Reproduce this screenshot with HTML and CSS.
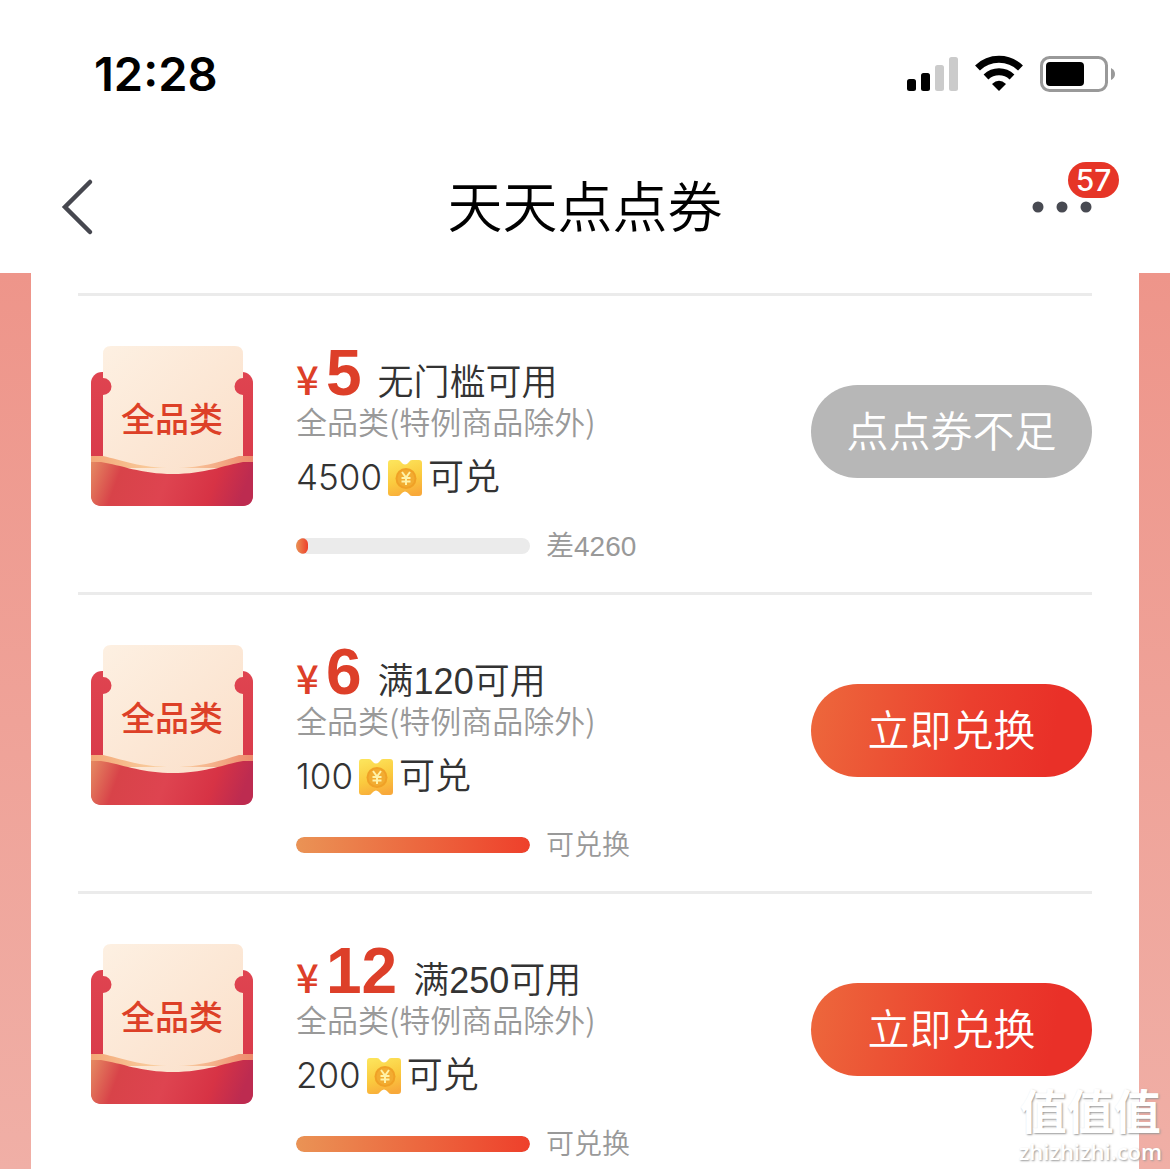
FILE: index.html
```html
<!DOCTYPE html>
<html lang="zh-CN">
<head>
<meta charset="utf-8">
<meta name="viewport" content="width=device-width, initial-scale=1">
<title>天天点点券</title>
<link rel="stylesheet" href="styles.css">
</head>
<body>
<svg class="defs" width="0" height="0" aria-hidden="true">
  <defs>
    <linearGradient id="paper" x1="0" y1="0" x2="1" y2="1">
      <stop offset="0" stop-color="#fdf0e2"/><stop offset="1" stop-color="#fbdfc9"/>
    </linearGradient>
    <linearGradient id="side" x1="0" y1="0" x2="0" y2="1">
      <stop offset="0" stop-color="#df4450"/><stop offset="1" stop-color="#d63648"/>
    </linearGradient>
    <linearGradient id="pocket" x1="0" y1="0" x2="1" y2="0.1">
      <stop offset="0" stop-color="#e58a62"/><stop offset="0.2" stop-color="#d84349"/><stop offset="0.5" stop-color="#de4450"/><stop offset="0.8" stop-color="#d73345"/><stop offset="1" stop-color="#bd2b50"/>
    </linearGradient>
    <linearGradient id="trim" x1="0" y1="0" x2="1" y2="0">
      <stop offset="0" stop-color="#f3a777"/><stop offset="0.5" stop-color="#fbd7a8"/><stop offset="1" stop-color="#ee8a6c"/>
    </linearGradient>
    <linearGradient id="gold" x1="0.3" y1="0" x2="0.6" y2="1">
      <stop offset="0" stop-color="#fce35a"/><stop offset="0.55" stop-color="#fbca3e"/><stop offset="1" stop-color="#f8a93a"/>
    </linearGradient>
    <symbol id="envelope" viewBox="0 0 162 162">
      <rect x="0" y="26" width="162" height="134" rx="11" fill="url(#side)"/>
      <path d="M20 0H144Q152 0 152 8V32A8.500 8.500 0 0 0 152 49V130H12V49A8.500 8.500 0 0 0 12 32V8Q12 0 20 0Z" fill="url(#paper)"/>
      <path d="M0 110H12C30 114 50 122 82 122S134 114 148 110H162V122H0Z" fill="url(#trim)"/>
      <path d="M0 116H10C30 119 50 128 82 128S134 119 152 116H162V149Q162 160 151 160H11Q0 160 0 149Z" fill="url(#pocket)"/>
    </symbol>
    <symbol id="ticket" viewBox="0 0 34 36">
      <path d="M3 0H10Q12 0 13 2Q17 7 21 2Q22 0 24 0H31Q34 0 34 3V33Q34 36 31 36H24Q22 36 21 34Q17 29 13 34Q12 36 10 36H3Q0 36 0 33V3Q0 0 3 0Z" fill="url(#gold)"/>
      <circle cx="18" cy="18.500" r="10.500" fill="#f0a126"/>
      <circle cx="18" cy="18.500" r="8.500" fill="#f2ac31"/>
      <path d="M14 12L18 17.500L22 12M18 17.500V25M13.500 18H22.500M13.500 21.500H22.500" fill="none" stroke="#fff2a8" stroke-width="2"/>
    </symbol>
  </defs>
</svg>
<div class="app">
  <header class="top">
    <div class="status">
      <span class="time">12:28</span>
      <div class="indicators">
        <svg width="52" height="36" viewBox="0 0 52 36" aria-label="信号">
          <rect x="1" y="23" width="9" height="12" rx="2.500"/><rect x="15" y="17" width="9" height="18" rx="2.500"/>
          <rect x="29" y="9" width="9" height="26" rx="2.500" fill="#cbcbcb"/><rect x="43" y="1" width="9" height="34" rx="2.500" fill="#cbcbcb"/>
        </svg>
        <svg width="50" height="38" viewBox="0 0 50 38" aria-label="无线网络">
          <path d="M3.500 13A31 31 0 0 1 46.500 13" fill="none" stroke="#000" stroke-width="7"/>
          <path d="M12 22A19 19 0 0 1 38 22" fill="none" stroke="#000" stroke-width="7"/>
          <path d="M25 36L18 29Q25 22.500 32 29Z"/>
        </svg>
        <svg width="75" height="36" viewBox="0 0 75 36" aria-label="电池">
          <rect x="1.500" y="1.500" width="65" height="33" rx="8" fill="none" stroke="#999" stroke-width="3"/>
          <rect x="6" y="6" width="38" height="24" rx="4"/>
          <path d="M71 12Q75 14 75 18T71 24Z" fill="#999"/>
        </svg>
      </div>
    </div>
    <nav class="bar">
      <button class="back" aria-label="返回">
        <svg width="32" height="56" viewBox="0 0 32 56"><path d="M28 3L3 28L28 53" fill="none" stroke="#46474f" stroke-width="4.500" stroke-linecap="round"/></svg>
      </button>
      <h1 class="title">天天点点券</h1>
      <button class="more" aria-label="更多">
        <svg width="60" height="12" viewBox="0 0 60 12" fill="#484a52"><circle cx="5" cy="6" r="5.500"/><circle cx="29" cy="6" r="5.500"/><circle cx="53" cy="6" r="5.500"/></svg>
        <span class="badge">57</span>
      </button>
    </nav>
  </header>
  <main class="stage">
    <ul class="coupons">
      <li class="coupon">
        <div class="cover"><svg class="art" aria-hidden="true"><use href="#envelope"/></svg><span class="label">全品类</span></div>
        <div class="info">
          <div class="price"><span class="yen">¥</span><strong class="amount">5</strong><span class="rule">无门槛可用</span></div>
          <div class="scope">全品类(特例商品除外)</div>
          <div class="cost"><span class="points">4500</span><svg class="coin" aria-hidden="true"><use href="#ticket"/></svg><span>可兑</span></div>
          <div class="progress"><div class="track"><div class="fill" style="width:5%"></div></div><span class="state">差4260</span></div>
        </div>
        <button class="redeem" disabled>点点券不足</button>
      </li>
      <li class="coupon">
        <div class="cover"><svg class="art" aria-hidden="true"><use href="#envelope"/></svg><span class="label">全品类</span></div>
        <div class="info">
          <div class="price"><span class="yen">¥</span><strong class="amount">6</strong><span class="rule">满120可用</span></div>
          <div class="scope">全品类(特例商品除外)</div>
          <div class="cost"><span class="points">100</span><svg class="coin" aria-hidden="true"><use href="#ticket"/></svg><span>可兑</span></div>
          <div class="progress"><div class="track"><div class="fill" style="width:100%"></div></div><span class="state">可兑换</span></div>
        </div>
        <button class="redeem">立即兑换</button>
      </li>
      <li class="coupon">
        <div class="cover"><svg class="art" aria-hidden="true"><use href="#envelope"/></svg><span class="label">全品类</span></div>
        <div class="info">
          <div class="price"><span class="yen">¥</span><strong class="amount">12</strong><span class="rule">满250可用</span></div>
          <div class="scope">全品类(特例商品除外)</div>
          <div class="cost"><span class="points">200</span><svg class="coin" aria-hidden="true"><use href="#ticket"/></svg><span>可兑</span></div>
          <div class="progress"><div class="track"><div class="fill" style="width:100%"></div></div><span class="state">可兑换</span></div>
        </div>
        <button class="redeem">立即兑换</button>
      </li>
    </ul>
  </main>
  <div class="watermark"><span class="mark">值值值</span><span class="site">zhizhizhi.com</span></div>
</div>
</body>
</html>
```
FILE: styles.css
```css
* { box-sizing: border-box; }
body {
  margin: 0;
  background: #fff;
  color: #333;
  font-family: "Liberation Sans", "Noto Sans CJK SC", sans-serif;
}
button { border: 0; padding: 0; background: none; font: inherit; color: inherit; }
svg { display: block; flex: none; overflow: visible; }
.defs { position: absolute; }

.app {
  position: relative;
  display: flex;
  flex-direction: column;
  height: 100vh;
  overflow: hidden;
}

/* status bar and navigation */
.top { flex: none; }
.status {
  display: flex;
  align-items: center;
  justify-content: space-between;
  height: 148px;
  padding: 0 55px 0 94px;
}
.time { color: #000; font: 600 47px/56px Inter, sans-serif; }
.indicators { display: flex; align-items: center; gap: 16px; }
.bar {
  display: grid;
  grid-template-columns: 96px 1fr 96px;
  align-items: center;
  height: 125px;
  padding: 0 42px 8px 62px;
}
.title {
  margin: 0;
  padding: 0 20px 8px 0;
  text-align: center;
  color: #000;
  font: 350 55px/64px "Noto Sans CJK SC", sans-serif;
}
.more { position: relative; justify-self: end; margin-right: 35px; }
.badge {
  position: absolute;
  left: 35px;
  bottom: 15px;
  width: 51px;
  border-radius: 18px;
  background: #e63527;
  color: #fff;
  text-align: center;
  font: 500 30px/36px Inter, sans-serif;
}

/* coupon list */
.stage {
  flex: 1;
  min-height: 0;
  overflow: hidden;
  padding: 0 31px;
  background: linear-gradient(#ee958a, #f0afa6);
}
.coupons {
  margin: 0;
  padding: 20px 47px 20px;
  background: #fff;
  list-style: none;
}
.coupon {
  display: flex;
  align-items: flex-start;
  height: 299px;
  padding: 50px 0 0 13px;
  border-top: 3px solid #ebebeb;
}
.cover { display: grid; flex: none; width: 162px; height: 162px; }
.art, .label { grid-area: 1 / 1; }
.art { width: 162px; height: 162px; }
.label {
  z-index: 1;
  padding-top: 51px;
  text-align: center;
  color: #dd4027;
  font: 500 34px/42px "Noto Sans CJK SC", sans-serif;
}
.info { flex: 1; min-width: 0; padding-left: 43px; white-space: nowrap; font-weight: 350; }
.price { display: flex; align-items: baseline; height: 55px; line-height: 54px; }
.yen {
  width: 30px;
  color: #dd3f29;
  font-family: "Noto Sans CJK SC", sans-serif;
  font-size: 40px;
  font-weight: 500;
}
.amount { color: #dd3f29; font-size: 64px; font-weight: 700; }
.rule { padding-left: 16px; font-size: 36px; }
.scope { color: #999; font: 350 31px/40px "Noto Sans CJK SC", sans-serif; }
.cost { display: flex; align-items: baseline; margin-top: 16px; font-size: 36px; line-height: 40px; }
.points { font-family: Inter, sans-serif; font-size: 35px; font-weight: 350; }
.coin { align-self: center; width: 34px; height: 36px; margin: 0 6px; }
.progress {
  display: flex;
  align-items: center;
  gap: 16px;
  margin-top: 32px;
  color: #999;
  font-size: 28px;
  line-height: 30px;
}
.state { padding-top: 2px; }
.track { width: 234px; height: 16px; border-radius: 8px; background: #ebebeb; overflow: hidden; }
.fill { height: 16px; border-radius: 8px; background: linear-gradient(90deg, #ea9355, #ee402b); }
.redeem {
  flex: none;
  width: 281px;
  height: 93px;
  margin-top: 39px;
  padding-bottom: 6px;
  border-radius: 47px;
  background: linear-gradient(100deg, #ed683c, #eb3f2e 55%, #e93028 85%);
  color: #fff;
  font: 350 42px/60px "Noto Sans CJK SC", sans-serif;
}
.redeem:disabled { background: #b7b7b7; }

.watermark {
  position: absolute;
  right: 8px;
  bottom: 4px;
  display: flex;
  flex-direction: column;
  align-items: center;
  color: #fff;
  text-shadow: 1px 1px 2px #999;
}
.mark { font: 700 47px/56px "Noto Sans CJK SC", sans-serif; }
.site { font: 600 22px/28px "Open Sans", sans-serif; }
```
